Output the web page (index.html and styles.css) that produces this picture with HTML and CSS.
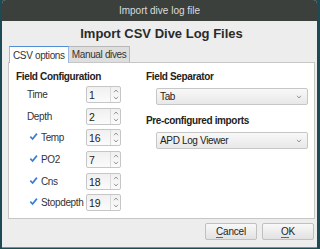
FILE: index.html
```html
<!DOCTYPE html>
<html lang="en">
<head>
  <meta charset="UTF-8">
  <title>Import dive log file</title>
  <link rel="stylesheet" href="styles.css">
</head>
<body>

<div class="window">
  <div class="titlebar">Import dive log file</div>

  <div class="dialog">
    <h1>Import CSV Dive Log Files</h1>

    <!-- Tabs -->
    <div class="tabs">
      <div class="tab active">CSV options</div>
      <div class="tab">Manual dives</div>
    </div>

    <div class="panel">
      <div class="col left">
        <div class="group-title">Field Configuration</div>

        <div class="field">
          <span class="label">Time</span>
          <div class="spin"><span class="val">1</span><span class="arrows"><svg viewBox="0 0 6 4"><path d="M1 3.2 3 1 5 3.2"/></svg><svg viewBox="0 0 6 4"><path d="M1 0.8 3 3 5 0.8"/></svg></span></div>
        </div>
        <div class="field">
          <span class="label">Depth</span>
          <div class="spin"><span class="val">2</span><span class="arrows"><svg viewBox="0 0 6 4"><path d="M1 3.2 3 1 5 3.2"/></svg><svg viewBox="0 0 6 4"><path d="M1 0.8 3 3 5 0.8"/></svg></span></div>
        </div>
        <div class="field">
          <span class="label check"><svg class="tick" viewBox="0 0 10 10"><path d="M1.5 5.2 4 7.8 8.8 1.8"/></svg>Temp</span>
          <div class="spin"><span class="val">16</span><span class="arrows"><svg viewBox="0 0 6 4"><path d="M1 3.2 3 1 5 3.2"/></svg><svg viewBox="0 0 6 4"><path d="M1 0.8 3 3 5 0.8"/></svg></span></div>
        </div>
        <div class="field">
          <span class="label check"><svg class="tick" viewBox="0 0 10 10"><path d="M1.5 5.2 4 7.8 8.8 1.8"/></svg>PO2</span>
          <div class="spin"><span class="val">7</span><span class="arrows"><svg viewBox="0 0 6 4"><path d="M1 3.2 3 1 5 3.2"/></svg><svg viewBox="0 0 6 4"><path d="M1 0.8 3 3 5 0.8"/></svg></span></div>
        </div>
        <div class="field">
          <span class="label check"><svg class="tick" viewBox="0 0 10 10"><path d="M1.5 5.2 4 7.8 8.8 1.8"/></svg>Cns</span>
          <div class="spin"><span class="val">18</span><span class="arrows"><svg viewBox="0 0 6 4"><path d="M1 3.2 3 1 5 3.2"/></svg><svg viewBox="0 0 6 4"><path d="M1 0.8 3 3 5 0.8"/></svg></span></div>
        </div>
        <div class="field">
          <span class="label check"><svg class="tick" viewBox="0 0 10 10"><path d="M1.5 5.2 4 7.8 8.8 1.8"/></svg>Stopdepth</span>
          <div class="spin"><span class="val">19</span><span class="arrows"><svg viewBox="0 0 6 4"><path d="M1 3.2 3 1 5 3.2"/></svg><svg viewBox="0 0 6 4"><path d="M1 0.8 3 3 5 0.8"/></svg></span></div>
        </div>
      </div>

      <div class="col right">
        <div class="group-title">Field Separator</div>
        <div class="combo"><span>Tab</span><svg class="caret" viewBox="0 0 6 4"><path d="M1 0.8 3 3 5 0.8"/></svg></div>

        <div class="group-title second">Pre-configured imports</div>
        <div class="combo"><span>APD Log Viewer</span><svg class="caret" viewBox="0 0 6 4"><path d="M1 0.8 3 3 5 0.8"/></svg></div>
      </div>
    </div>

    <div class="buttons">
      <button><u>C</u>ancel</button>
      <button><u>O</u>K</button>
    </div>
  </div>
</div>

</body>
</html>
```

FILE: styles.css
```css
/* Desktop + window frame */
html, body {
  margin: 0;
  height: 100%;
}

body {
  background: #1d4a55;
  font-family: "Liberation Sans", sans-serif;
  font-size: 10px;
  letter-spacing: -0.35px;
  color: #333;
  padding: 0 3px 0 2px;
  box-sizing: border-box;
}

.window {
  background: #ededed;
  height: 247px;
  border-radius: 4px 4px 0 0;
  overflow: hidden;
  display: flex;
  flex-direction: column;
  border-bottom: 1px solid #8a8a8a;
}

.titlebar {
  background: #3b403d;
  color: #dcdcdc;
  text-align: center;
  height: 21px;
  line-height: 21px;
  font-size: 10px;
  letter-spacing: 0;
}

.dialog {
  flex: 1;
  display: flex;
  flex-direction: column;
  padding: 0 2px 0 6px;
}

h1 {
  margin: 3px 0 0;
  text-align: center;
  font-size: 13px;
  font-weight: bold;
  letter-spacing: 0;
  color: #2a2a2a;
  height: 20px;
  line-height: 20px;
}

/* Tabs */
.tabs {
  display: flex;
  height: 18px;
  align-items: flex-end;
  padding-left: 1px;
}

.tab {
  padding: 0 3px;
  height: 15px;
  line-height: 16px;
  background: #dedede;
  border: 1px solid #b8b8b8;
  border-bottom: none;
  color: #333;
}

.tab.active {
  background: #fff;
  height: 16px;
  line-height: 17px;
  border-color: #9bbbe0;
  border-top: 1px solid #4f8fd8;
  margin-right: -1px;
  margin-bottom: -1px;
  position: relative;
  z-index: 1;
}

.panel {
  background: #fff;
  border: 1px solid #c6c6c6;
  height: 157px;
  box-sizing: border-box;
  display: flex;
}

.col.left {
  width: 130px;
  padding: 8px 0 0 7px;
}

.col.right {
  flex: 1;
  padding: 8px 6px 0 0;
}

.group-title {
  font-weight: bold;
  color: #222;
  height: 13px;
  line-height: 12px;
}

.group-title.second {
  margin-top: 10px;
}

/* Spin rows */
.field {
  display: flex;
  align-items: center;
  height: 21.6px;
}

.label {
  width: 70px;
  padding-left: 11px;
  box-sizing: border-box;
  display: flex;
  align-items: center;
  color: #333;
}

.label.check {
  padding-left: 13px;
}

.tick {
  width: 9px;
  height: 9px;
  margin-right: 3px;
  margin-top: -2px;
  fill: none;
  stroke: #3a7ed4;
  stroke-width: 1.9;
}

.spin {
  width: 35px;
  height: 17px;
  border: 1px solid #c6c6c6;
  border-radius: 2px;
  background: linear-gradient(#f0f0f0, #fbfbfb);
  display: flex;
  box-sizing: border-box;
}

.spin .val {
  flex: 1;
  padding-left: 2px;
  line-height: 16px;
  font-size: 10.5px;
  letter-spacing: 0;
  color: #222;
}

.spin .arrows {
  width: 9px;
  border-left: 1px solid #dadada;
  display: flex;
  flex-direction: column;
  justify-content: space-between;
  align-items: center;
  padding: 2px 0;
}

.spin .arrows svg,
.caret {
  width: 6px;
  height: 4px;
  fill: none;
  stroke: #8c8c8c;
  stroke-width: 0.9;
}

/* Combos */
.combo {
  margin: 4px 0 0 10px;
  height: 17px;
  border: 1px solid #c6c6c6;
  border-radius: 2px;
  background: linear-gradient(#f8f8f8, #e8e8e8);
  display: flex;
  align-items: center;
  justify-content: space-between;
  padding: 0 5px 0 3px;
  box-sizing: border-box;
  color: #222;
}

/* Buttons */
.buttons {
  display: flex;
  justify-content: flex-end;
  gap: 5px;
  margin-top: 4px;
  padding-right: 1px;
}

button {
  width: 52px;
  height: 17px;
  padding: 0;
  font-family: "Liberation Sans", sans-serif;
  font-size: 10px;
  letter-spacing: -0.2px;
  color: #222;
  background: linear-gradient(#f8f8f8, #e2e2e2);
  border: 1px solid #c0c0c0;
  border-radius: 2px;
}

button u {
  text-decoration: none;
  border-bottom: 1px solid #666;
  line-height: 10px;
  display: inline-block;
}
```
